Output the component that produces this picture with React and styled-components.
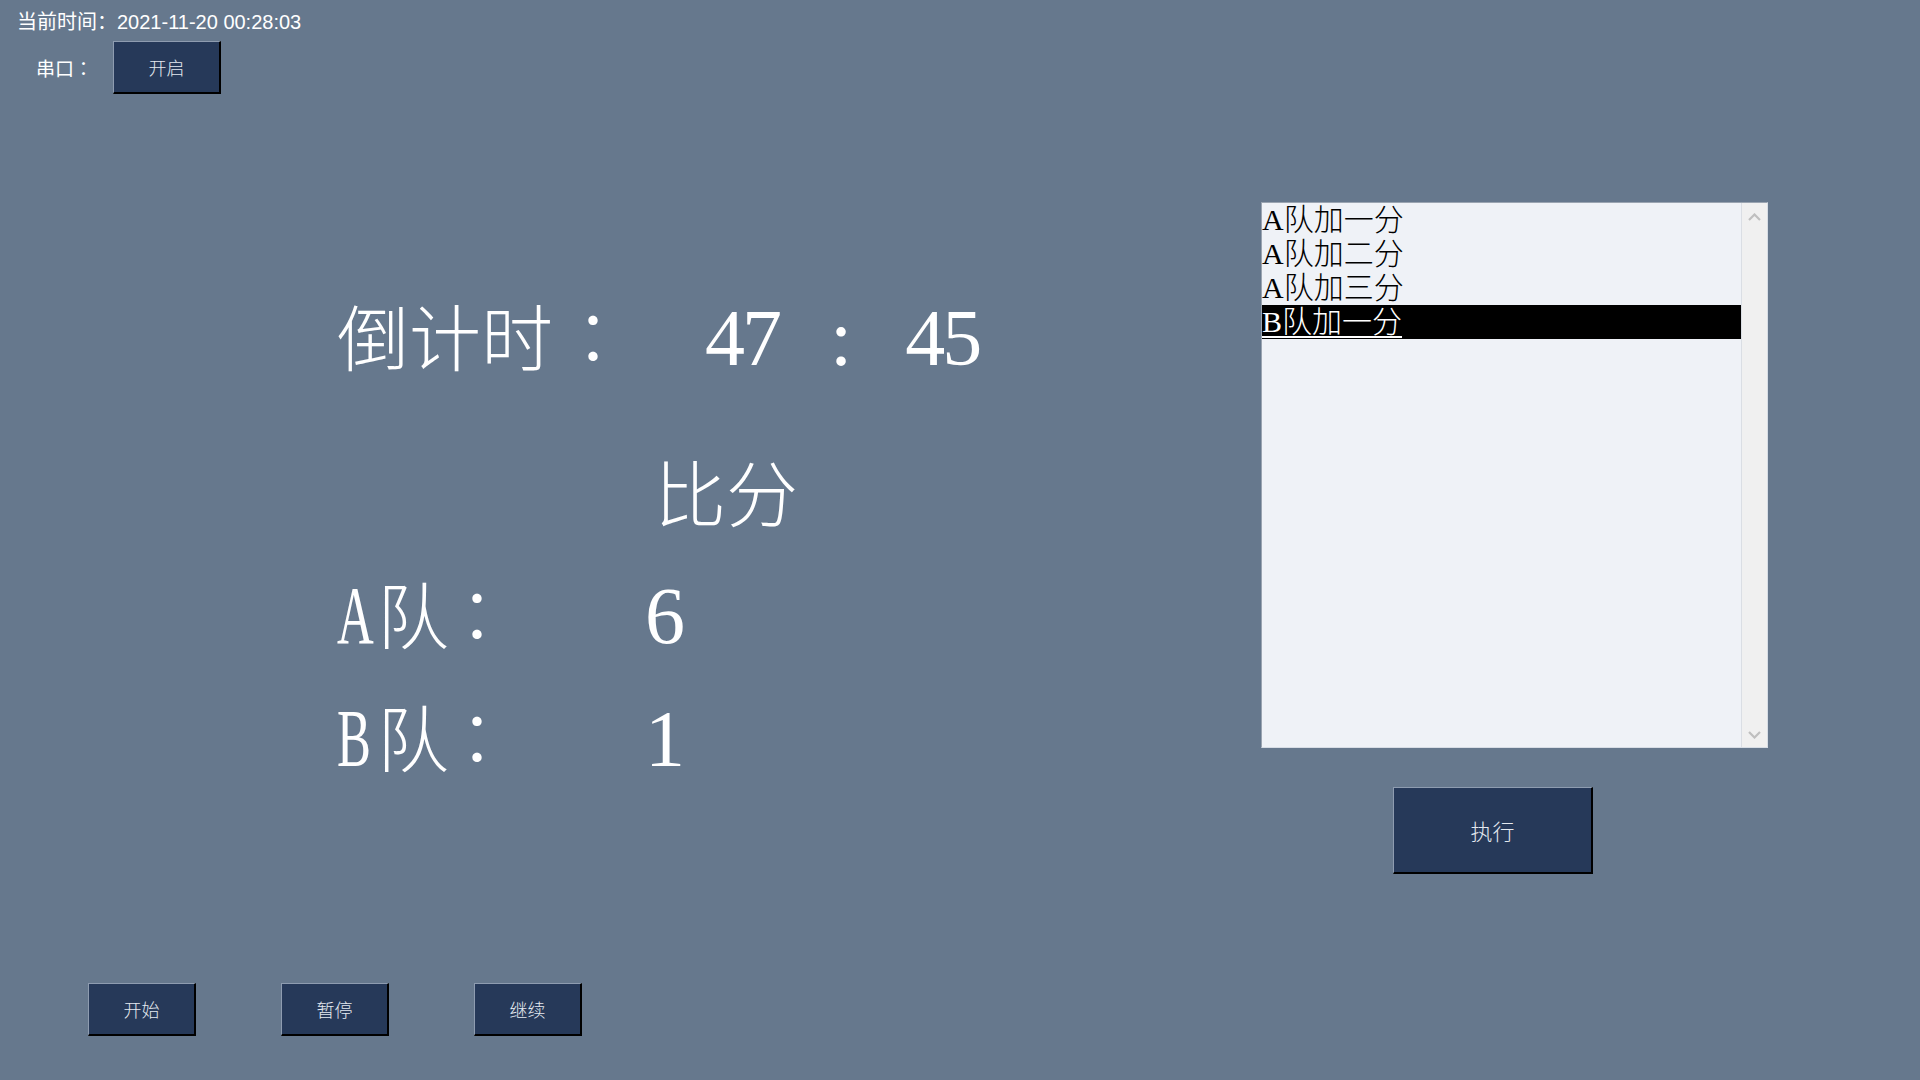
import React from "react";
import styled, { createGlobalStyle } from "styled-components";

const GlobalStyle = createGlobalStyle`
  html, body {
    margin: 0;
    padding: 0;
    background: #66788d;
  }
  body {
    overflow: hidden;
  }
  * {
    box-sizing: border-box;
  }
`;

const Page = styled.div`
  width: 1920px;
  height: 1080px;
  display: flex;
  flex-direction: column;
  background: #66788d;
  color: #fff;
`;

const Header = styled.header`
  display: flex;
  flex-direction: column;
  gap: 7px;
  padding: 10px 0 0 17px;
`;

const ClockLine = styled.div`
  height: 24px;
  font-family: "Liberation Sans", "Noto Sans CJK SC", sans-serif;
  font-size: 20px;
  line-height: 24px;
  color: #fff;
  white-space: nowrap;
`;

const SerialRow = styled.div`
  display: flex;
  align-items: center;
  padding-left: 19px;
`;

const SerialLabel = styled.span`
  width: 77px;
  font-family: "Noto Sans CJK SC", sans-serif;
  font-size: 19px;
  line-height: 24px;
  color: #fff;
`;

const CenterColon = styled.span`
  font-family: "Noto Sans CJK TC", "Noto Sans CJK SC", sans-serif;
  line-height: 0;
  letter-spacing: 0;
  padding-left: ${(p) => p.$shift || 0}px;
  margin-right: ${(p) => -(p.$shift || 0)}px;
`;

const Button = styled.button`
  width: ${(p) => p.$w || 108}px;
  height: ${(p) => p.$h || 53}px;
  margin: 0;
  padding: 0;
  display: flex;
  align-items: center;
  justify-content: center;
  background: #263959;
  border-style: solid;
  border-width: 1px 2px 2px 1px;
  border-color: #8e9cb0 #000 #000 #8e9cb0;
  color: #e4e9f0;
  font-family: "Noto Sans CJK SC", sans-serif;
  font-weight: 300;
  font-size: ${(p) => p.$fs || 18}px;
  cursor: pointer;
`;

const Main = styled.main`
  flex: 1;
  display: flex;
  min-height: 0;
`;

const Scoreboard = styled.section`
  flex: 1;
  display: flex;
  flex-direction: column;
  padding: 204px 0 0 337px;
`;

const BigRow = styled.div`
  display: flex;
  align-items: baseline;
  margin-top: ${(p) => p.$mt || 0}px;
  padding-left: ${(p) => p.$pl || 0}px;
  font-family: "Liberation Serif", "Noto Sans CJK SC", serif;
  color: #fff;
  white-space: nowrap;
`;

const BigLabel = styled.span`
  font-size: 72px;
  line-height: 80px;
  font-weight: 300;
`;

const TightChar = styled.span`
  letter-spacing: -8px;
`;

const BigNum = styled.span`
  margin-left: ${(p) => p.$ml || 0}px;
  font-size: 80px;
  line-height: 80px;
  letter-spacing: -3px;
`;

const TeamLetter = styled.span`
  display: inline-block;
  width: 40px;
  font-size: 82px;
  line-height: 80px;
  transform: scaleX(0.62);
  transform-origin: left center;
`;

const SidePanel = styled.aside`
  width: 507px;
  margin-right: 152px;
  padding-top: 108px;
  display: flex;
  flex-direction: column;
`;

const ListBox = styled.div`
  height: 546px;
  display: flex;
  border: 1px solid;
  border-color: #9aa4b1 #d7dde5 #d7dde5 #9aa4b1;
  background: #eff2f7;
`;

const Items = styled.ul`
  flex: 1;
  margin: 0;
  padding: 0;
  list-style: none;
`;

const Item = styled.li`
  height: 34px;
  line-height: 34px;
  font-family: "Liberation Serif", "Noto Sans CJK SC", serif;
  font-size: 30px;
  font-weight: 300;
  white-space: nowrap;
  color: ${(p) => (p.$selected ? "#fff" : "#000")};
  background: ${(p) => (p.$selected ? "#000" : "transparent")};
`;

const ItemText = styled.span`
  text-decoration: ${(p) => (p.$selected ? "underline" : "none")};
  text-decoration-thickness: 2px;
  text-underline-offset: 4px;
`;

const Scrollbar = styled.div`
  width: 26px;
  display: flex;
  flex-direction: column;
  align-items: center;
  justify-content: space-between;
  padding: 10px 0 8px;
  border-left: 1px solid #dadee4;
  background: #f0f0f0;
`;

const ExecuteWrap = styled.div`
  margin: 39px 0 0 132px;
`;

const Footer = styled.footer`
  display: flex;
  gap: 85px;
  padding: 0 0 44px 88px;
`;

const Chevron = ({ dir }) => (
  <svg width="13" height="8" viewBox="0 0 13 8">
    <polyline
      points={dir === "up" ? "1,7 6.5,1.5 12,7" : "1,1 6.5,6.5 12,1"}
      fill="none"
      stroke="#bfbfbf"
      strokeWidth="2.2"
    />
  </svg>
);

const logItems = ["A队加一分", "A队加二分", "A队加三分", "B队加一分"];

const TeamRow = ({ letter, score, mt }) => (
  <BigRow $mt={mt}>
    <TeamLetter>{letter}</TeamLetter>
    <BigLabel>
      <TightChar>队</TightChar>
      <CenterColon>：</CenterColon>
    </BigLabel>
    <BigNum $ml={132}>{score}</BigNum>
  </BigRow>
);

export default function App() {
  const selected = 3;
  return (
    <>
      <GlobalStyle />
      <Page>
        <Header>
          <ClockLine>当前时间：2021-11-20 00:28:03</ClockLine>
          <SerialRow>
            <SerialLabel>
              串口<CenterColon>：</CenterColon>
            </SerialLabel>
            <Button>开启</Button>
          </SerialRow>
        </Header>

        <Main>
          <Scoreboard>
            <BigRow>
              <BigLabel>
                倒计时<CenterColon $shift={4}>：</CenterColon>
              </BigLabel>
              <BigNum $ml={80}>47</BigNum>
              <BigNum $ml={51}>:</BigNum>
              <BigNum $ml={56}>45</BigNum>
            </BigRow>
            <BigRow $mt={76} $pl={317}>
              <BigLabel>比分</BigLabel>
            </BigRow>
            <TeamRow letter="A" score="6" mt={39} />
            <TeamRow letter="B" score="1" mt={40} />
          </Scoreboard>

          <SidePanel>
            <ListBox>
              <Items>
                {logItems.map((t, i) => (
                  <Item key={i} $selected={i === selected}>
                    <ItemText $selected={i === selected}>{t}</ItemText>
                  </Item>
                ))}
              </Items>
              <Scrollbar>
                <Chevron dir="up" />
                <Chevron dir="down" />
              </Scrollbar>
            </ListBox>
            <ExecuteWrap>
              <Button $w={200} $h={87} $fs={22}>
                执行
              </Button>
            </ExecuteWrap>
          </SidePanel>
        </Main>

        <Footer>
          <Button>开始</Button>
          <Button>暂停</Button>
          <Button>继续</Button>
        </Footer>
      </Page>
    </>
  );
}
